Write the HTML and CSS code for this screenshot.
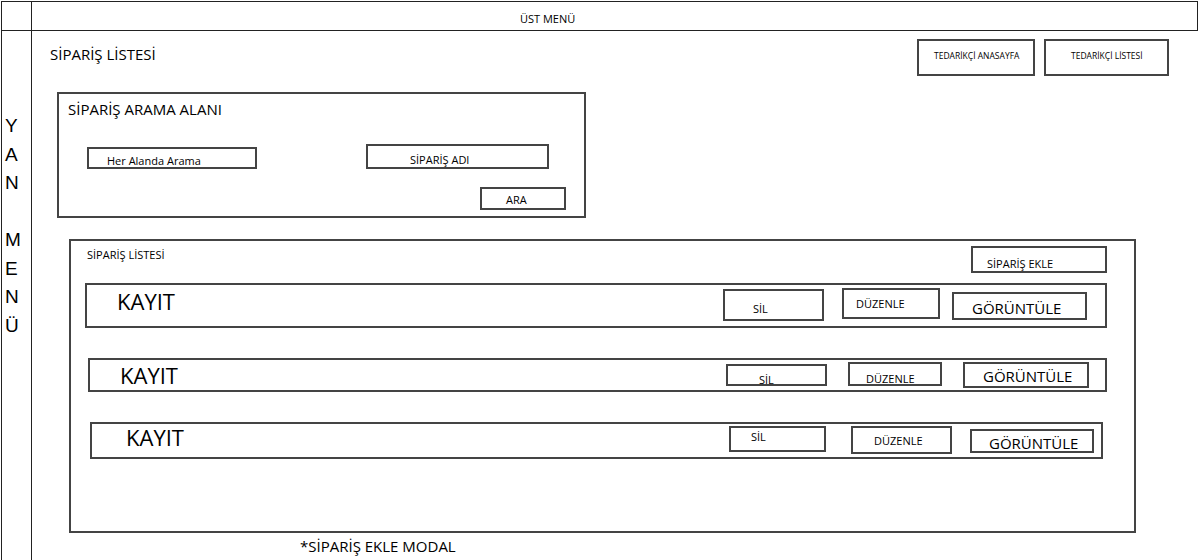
FILE: index.html
```html
<!DOCTYPE html>
<html lang="tr">
<head>
<meta charset="utf-8">
<title>Sipariş Listesi</title>
<link rel="stylesheet" href="styles.css">
</head>
<body>
<div class="frame">
  <header class="topbar">
    <div class="corner"></div>
    <div class="topmenu">ÜST MENÜ</div>
  </header>
  <div class="layout">
    <aside class="side">
      <span>Y</span><span>A</span><span>N</span><span>&nbsp;</span><span>M</span><span>E</span><span>N</span><span>Ü</span>
    </aside>
    <main class="main">
      <div class="head-row">
        <h1 class="page-title">SİPARİŞ LİSTESİ</h1>
        <div class="links">
          <div class="box link link-home">TEDARİKÇİ ANASAYFA</div>
          <div class="box link link-list">TEDARİKÇİ LİSTESİ</div>
        </div>
      </div>

      <section class="box search">
        <h2 class="search-title">SİPARİŞ ARAMA ALANI</h2>
        <div class="fields">
          <div class="box field field-all">Her Alanda Arama</div>
          <div class="box field field-name">SİPARİŞ ADI</div>
        </div>
        <div class="box field search-btn">ARA</div>
      </section>

      <section class="box list">
        <div class="list-head">
          <div class="list-title">SİPARİŞ LİSTESİ</div>
          <div class="box add-btn">SİPARİŞ EKLE</div>
        </div>

        <div class="box rec rec1">
          <div class="rec-name">KAYIT</div>
          <div class="box act sil">SİL</div>
          <div class="box act duz">DÜZENLE</div>
          <div class="box act gor">GÖRÜNTÜLE</div>
        </div>

        <div class="box rec rec2">
          <div class="rec-name">KAYIT</div>
          <div class="box act sil">SİL</div>
          <div class="box act duz">DÜZENLE</div>
          <div class="box act gor">GÖRÜNTÜLE</div>
        </div>

        <div class="box rec rec3">
          <div class="rec-name">KAYIT</div>
          <div class="box act sil">SİL</div>
          <div class="box act duz">DÜZENLE</div>
          <div class="box act gor">GÖRÜNTÜLE</div>
        </div>
      </section>

      <p class="note">*SİPARİŞ EKLE MODAL</p>
    </main>
  </div>
</div>
</body>
</html>
```
FILE: styles.css
```css
* { box-sizing: border-box; margin: 0; padding: 0; }

html, body { background: #fff; }

body {
  font-family: "Open Sans", "Noto Sans", sans-serif;
  color: #000;
  width: 1200px;
  height: 560px;
  overflow: hidden;
}

.frame { display: flex; flex-direction: column; }

/* top menu */
.topbar {
  display: flex;
  margin: 1px 0 0 1px;
  width: 1197px;
  height: 30px;
  border: 1px solid #222;
}
.corner { width: 30px; border-right: 1px solid #222; }
.topmenu {
  font-size: 11px;
  line-height: 14px;
  padding: 10px 0 0 488px;
  white-space: nowrap;
}

.layout { display: flex; }

/* side menu */
.side {
  display: flex;
  flex-direction: column;
  width: 31px;
  height: 529px;
  margin-left: 1px;
  border-left: 1px solid #222;
  border-right: 1px solid #222;
  padding: 81px 0 0 3px;
  font-family: "Liberation Sans", Arial, sans-serif;
  font-size: 19px;
  line-height: 28.5px;
}

.main { flex: 1; display: flex; flex-direction: column; align-items: flex-start; }

.box { border: 2px solid #444; background: #fff; }

/* header row */
.head-row {
  display: flex;
  align-self: stretch;
  align-items: flex-start;
  margin-top: 8px;
}
.page-title {
  font-size: 15px;
  line-height: 20px;
  font-weight: 400;
  margin: 5px 0 0 18px;
}
.links { display: flex; gap: 9px; margin: 0 31px 0 auto; }
.link {
  height: 37px;
  font-size: 8.5px;
  line-height: 11px;
  padding-top: 9px;
  white-space: nowrap;
}
.link-home { width: 118px; padding-left: 15px; }
.link-list { width: 125px; padding-left: 25px; }

/* search area */
.search {
  display: flex;
  flex-direction: column;
  align-items: flex-start;
  width: 529px;
  height: 126px;
  margin: 16px 0 0 25px;
}
.search-title {
  font-size: 15px;
  line-height: 20px;
  font-weight: 400;
  margin: 5px 0 0 9px;
}
.fields { display: flex; align-items: flex-start; margin-top: 25px; }
.field { font-size: 11px; line-height: 14px; white-space: nowrap; }
.field-all { width: 170px; height: 22px; margin: 3px 0 0 28px; padding: 5px 0 0 18px; }
.field-name { width: 183px; height: 25px; margin-left: 109px; padding: 7px 0 0 42px; }
.search-btn { width: 86px; height: 23px; margin: 18px 0 0 421px; padding: 4px 0 0 24px; }

/* list */
.list {
  display: flex;
  flex-direction: column;
  align-items: flex-start;
  width: 1067px;
  height: 294px;
  margin: 21px 0 0 37px;
}
.list-head { display: flex; align-self: stretch; align-items: flex-start; }
.list-title { font-size: 11px; line-height: 14px; margin: 7px 0 0 16px; }
.add-btn {
  width: 136px;
  height: 27px;
  margin: 5px 27px 0 auto;
  font-size: 11px;
  line-height: 14px;
  padding: 9px 0 0 14px;
}

.rec { display: flex; align-items: flex-start; }
.rec-name { flex: 1; font-size: 22px; line-height: 26px; }
.act { font-size: 11px; line-height: 14px; white-space: nowrap; }
.act.gor { font-size: 15px; line-height: 18px; }

.rec1 { width: 1022px; height: 45px; margin: 10px 0 0 14px; }
.rec1 .rec-name { margin: 3px 0 0 30px; }
.rec1 .sil { width: 101px; height: 32px; margin-top: 4px; padding: 11px 0 0 28px; }
.rec1 .duz { width: 98px; height: 31px; margin: 3px 0 0 18px; padding: 7px 0 0 12px; }
.rec1 .gor { width: 135px; height: 28px; margin: 7px 18px 0 12px; padding: 5px 0 0 18px; }

.rec2 { width: 1019px; height: 34px; margin: 30px 0 0 17px; }
.rec2 .rec-name { margin: 2px 0 0 30px; }
.rec2 .sil { width: 101px; height: 22px; margin-top: 4px; padding: 7px 0 0 31px; }
.rec2 .duz { width: 94px; height: 24px; margin: 2px 0 0 21px; padding: 8px 0 0 16px; }
.rec2 .gor { width: 126px; height: 26px; margin: 2px 16px 0 21px; padding: 3px 0 0 18px; }

.rec3 { width: 1013px; height: 37px; margin: 30px 0 0 19px; }
.rec3 .rec-name { margin: 0 0 0 34px; }
.rec3 .sil { width: 97px; height: 26px; margin-top: 2px; padding: 2px 0 0 20px; }
.rec3 .duz { width: 101px; height: 28px; margin: 2px 0 0 25px; padding: 6px 0 0 21px; }
.rec3 .gor { width: 124px; height: 24px; margin: 5px 7px 0 18px; padding: 3px 0 0 17px; }

.note {
  font-size: 15px;
  line-height: 20px;
  margin: 3px 0 0 268px;
}
```
